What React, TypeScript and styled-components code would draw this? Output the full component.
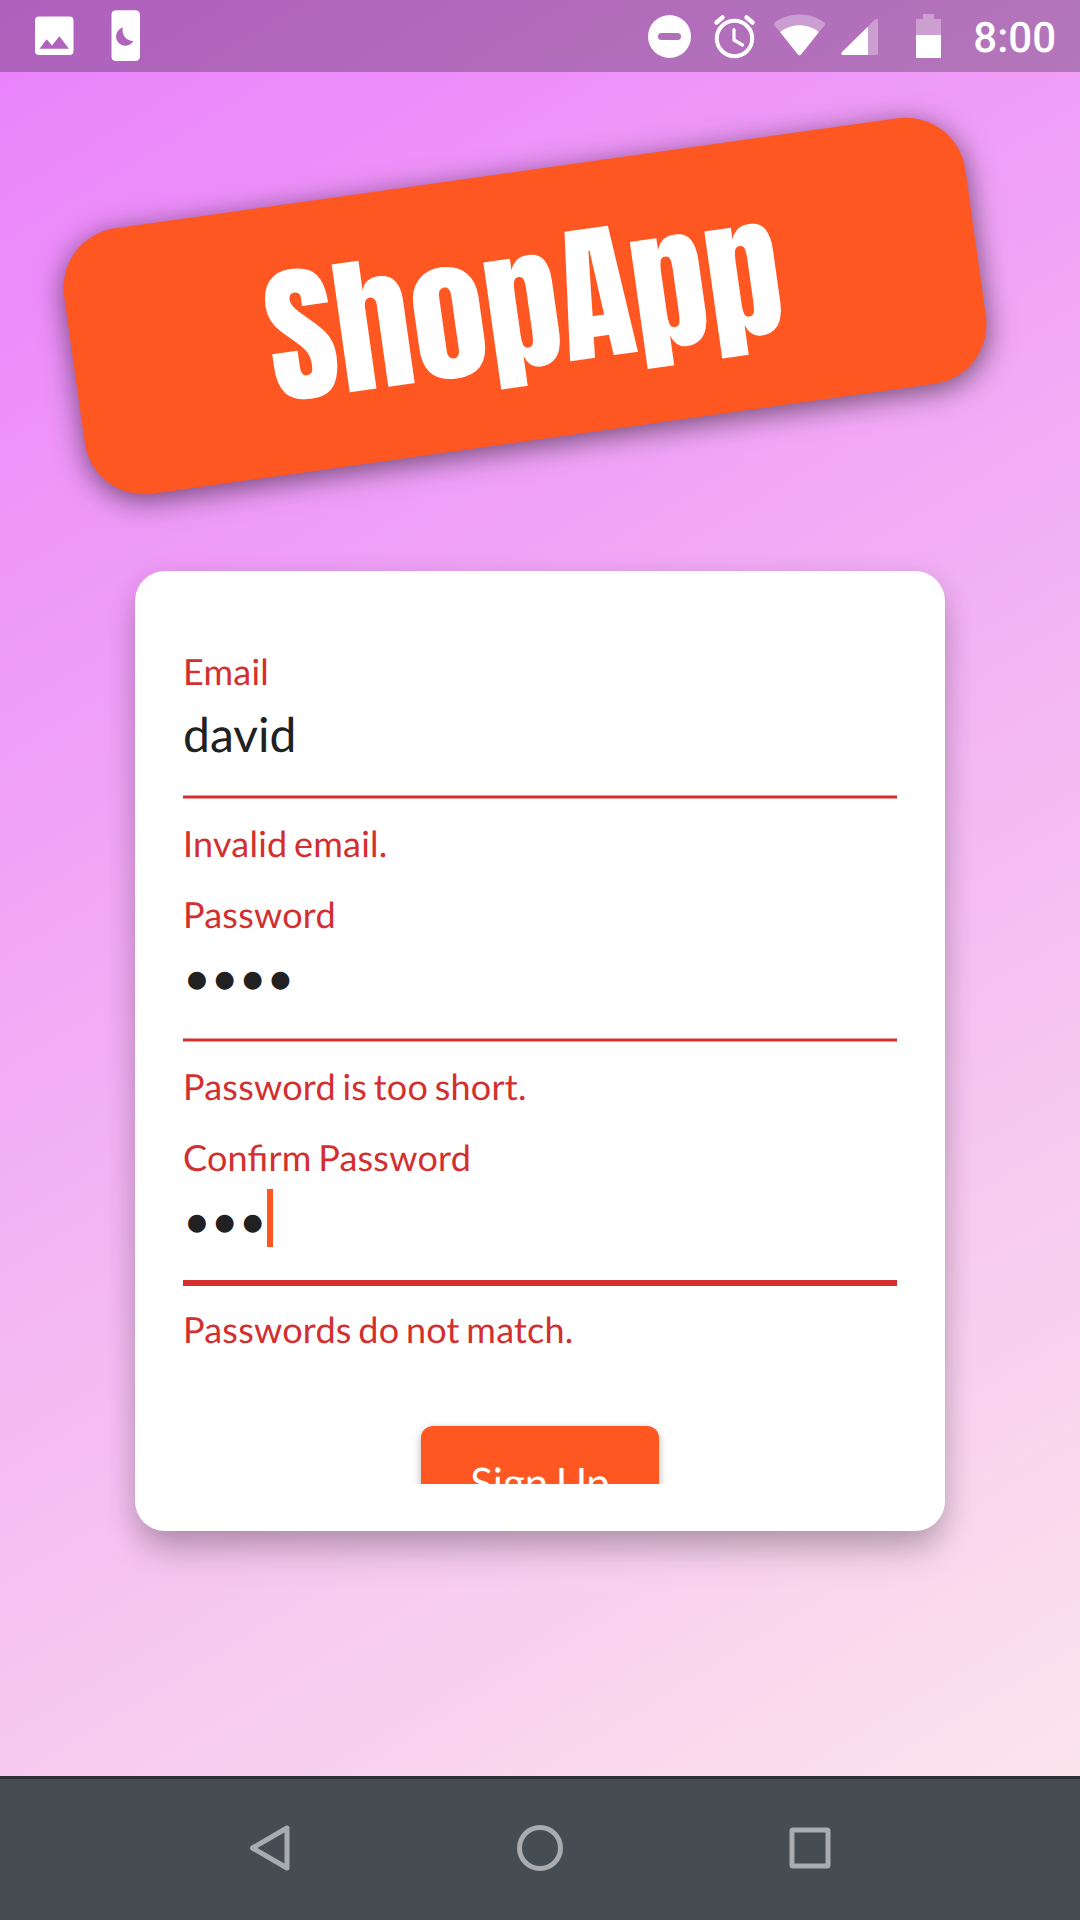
import React from "react";
import styled, { createGlobalStyle, css } from "styled-components";

const colors = {
  error: "#d32f2f",
  accent: "#ff5722",
  ink: "#212121",
  navIcon: "#a9acae",
};

const GlobalStyle = createGlobalStyle`
  *, *::before, *::after { box-sizing: border-box; }
  html, body { margin: 0; padding: 0; }
  body {
    font-family: Lato, "Noto Sans", sans-serif;
    text-rendering: geometricPrecision;
  }
`;

const Screen = styled.div`
  display: flex;
  flex-direction: column;
  width: 1080px;
  height: 1920px;
  overflow: hidden;
`;

const Body = styled.main`
  flex: 1;
  display: flex;
  flex-direction: column;
  align-items: center;
  background: linear-gradient(148.7deg, #ea80fc 0%, #fce4ec 100%);
`;

const StatusBar = styled.header`
  align-self: stretch;
  display: flex;
  justify-content: space-between;
  height: 72px;
  background: rgba(0, 0, 0, 0.25);
`;

const StatusIcons = styled.svg`
  display: block;
  height: 72px;
`;

const StatusEnd = styled.div`
  display: flex;
  align-items: center;
  padding-right: 24px;
`;

const Clock = styled.time`
  margin-left: 21px;
  padding-top: 5px;
  font: 500 42px/50px Roboto, sans-serif;
  color: #fff;
`;

const Banner = styled.div`
  display: flex;
  justify-content: center;
  align-items: center;
  width: 910px;
  height: 268px;
  margin: 100px 30px 0 0;
  border-radius: 60px;
  background: ${colors.accent};
  box-shadow: 0 6px 29px rgba(0, 0, 0, 0.54);
  transform: rotate(-8deg);
`;

const Brand = styled.h1`
  margin: -2px 2px 0 0;
  font: 400 150px/226px Anton, Impact, sans-serif;
  color: #fff;
`;

const Card = styled.section`
  width: 810px;
  height: 960px;
  margin-top: 131px;
  padding: 48px;
  border-radius: 30px;
  background: #fff;
  box-shadow: 0 24px 36px -6px rgba(0, 0, 0, 0.22), 0 6px 28px rgba(0, 0, 0, 0.12);
`;

const FormViewport = styled.form`
  display: flex;
  flex-direction: column;
  height: 865px;
  padding-top: 34px;
  overflow: hidden;
`;

const Field = styled.div`
  flex: none;
  display: flex;
  flex-direction: column;
  height: 243px;
`;

const Caption = styled.span`
  font-size: 36px;
  line-height: 36px;
  letter-spacing: 0.22px;
  word-spacing: -2.8px;
  font-feature-settings: "liga" 1;
  color: ${colors.error};
`;

const Value = styled.div`
  display: flex;
  align-items: center;
  height: 48px;
  margin-top: 22px;
  font-size: 48px;
  line-height: 48px;
  color: ${colors.ink};
`;

const Caret = styled.span`
  width: 6px;
  height: 58px;
  margin-bottom: 6px;
  background: ${colors.accent};
`;

const Rule = styled.div<{ $focused?: boolean }>`
  flex: none;
  ${(p) =>
    p.$focused
      ? css`
          height: 6px;
          margin: 35px 0 25px;
          background: ${colors.error};
        `
      : css`
          height: 4px;
          margin: 36px 0 26px;
          background: ${colors.error};
          border: solid #e99797;
          border-width: 1px 0;
        `}
`;

const SubmitButton = styled.button`
  flex: none;
  align-self: center;
  width: 238px;
  height: 108px;
  margin-top: 44px;
  padding: 3px 0 0;
  border: 0;
  border-radius: 12px;
  background: ${colors.accent};
  box-shadow: 0 3px 8px rgba(0, 0, 0, 0.3);
  font: 400 42px/50px Lato, sans-serif;
  word-spacing: -3px;
  text-rendering: inherit;
  color: #fff;
`;

const NavBar = styled.nav`
  display: flex;
  justify-content: center;
  align-items: center;
  gap: 222px;
  height: 144px;
  border-top: 3px solid #2c3136;
  background: #454d53;
`;

const NavIcon = styled.svg`
  display: block;
  width: 48px;
  height: 48px;
  margin-top: -3px;
  fill: none;
  stroke: ${colors.navIcon};
  stroke-width: 5;
  stroke-linejoin: round;
`;

type FormField = { label: string; value: string; error: string; focused?: boolean };

const fields: FormField[] = [
  { label: "Email", value: "david", error: "Invalid email." },
  { label: "Password", value: "••••", error: "Password is too short." },
  { label: "Confirm Password", value: "•••", error: "Passwords do not match.", focused: true },
];

function NotificationIcons() {
  return (
    <StatusIcons width="160" viewBox="0 0 160 72">
      <path
        fill="#fff"
        fillRule="evenodd"
        d="M39 16.5h30.5a4 4 0 0 1 4 4V51a4 4 0 0 1-4 4H39a4 4 0 0 1-4-4V20.500a4 4 0 0 1 4-4ZM39.500 48.700H69L59.300 36.200 52 45.500 46.700 39.200Z"
      />
      <path
        fill="#fff"
        fillRule="evenodd"
        d="M115.500 10.300h20a4.500 4.500 0 0 1 4.500 4.500v41.700a4.500 4.500 0 0 1-4.500 4.500h-20a4.500 4.500 0 0 1-4-4.500v-41.700A4.500 4.500 0 0 1 115.500 10.300ZM123 27.500A9.300 9.300 0 1 0 133.500 41 10.500 10.500 0 0 1 123 27.500Z"
      />
    </StatusIcons>
  );
}

function SystemIcons() {
  return (
    <StatusIcons width="312" viewBox="640 0 312 72">
      <circle cx="669.5" cy="36.500" r="21.500" fill="#fff" />
      <rect x="658" y="33" width="23" height="7" rx="3.500" fill="#b16fba" />
      <g fill="none" stroke="#fff" strokeLinecap="round" strokeLinejoin="round">
        <circle cx="734.500" cy="38.500" r="17.700" strokeWidth="4" />
        <path strokeWidth="3.200" d="M734 29.500V40l8.500 5" />
        <path strokeWidth="4.500" d="M716.500 22.500l6-5M752.500 22.500l-6-5" />
      </g>
      <path
        fill="#fff"
        fillOpacity=".33"
        d="M774.800 22.500C781 17.500 790 14.500 799.500 14.500S818 17.500 824.200 22.500Q826 24 824.500 25.700L819 32C808 23 791 23 780 32L774.500 25.700Q773 24 774.800 22.500Z"
      />
      <path fill="#fff" d="M780 32C791 23 808 23 819 32L801.500 54Q799.500 56.500 797.500 54Z" />
      <path fill="#fff" fillOpacity=".33" d="M868 26.500 875 19.500Q878 17.500 878 21V53Q878 55 876 55H868Z" />
      <path fill="#fff" d="M868 26.500V55H843Q840 54.500 842 52Z" />
      <path fill="#fff" fillOpacity=".33" d="M923 14h11v5h7v16h-25V19h7Z" />
      <path fill="#fff" d="M916 35h25v23h-25Z" />
    </StatusIcons>
  );
}

export default function App() {
  return (
    <Screen>
      <GlobalStyle />
      <Body>
        <StatusBar>
          <NotificationIcons />
          <StatusEnd>
            <SystemIcons />
            <Clock>8:00</Clock>
          </StatusEnd>
        </StatusBar>
        <Banner>
          <Brand>ShopApp</Brand>
        </Banner>
        <Card>
          <FormViewport>
            {fields.map((field) => (
              <Field key={field.label}>
                <Caption>{field.label}</Caption>
                <Value>
                  {field.value}
                  {field.focused && <Caret />}
                </Value>
                <Rule $focused={field.focused} />
                <Caption>{field.error}</Caption>
              </Field>
            ))}
            <SubmitButton type="button">Sign Up</SubmitButton>
          </FormViewport>
        </Card>
      </Body>
      <NavBar>
        <NavIcon viewBox="0 0 48 48">
          <path d="M6.500 24 41 4V44Z" />
        </NavIcon>
        <NavIcon viewBox="0 0 48 48">
          <circle cx="24" cy="24" r="20.500" />
        </NavIcon>
        <NavIcon viewBox="0 0 48 48">
          <rect x="6" y="6" width="36" height="36" rx="1" />
        </NavIcon>
      </NavBar>
    </Screen>
  );
}
